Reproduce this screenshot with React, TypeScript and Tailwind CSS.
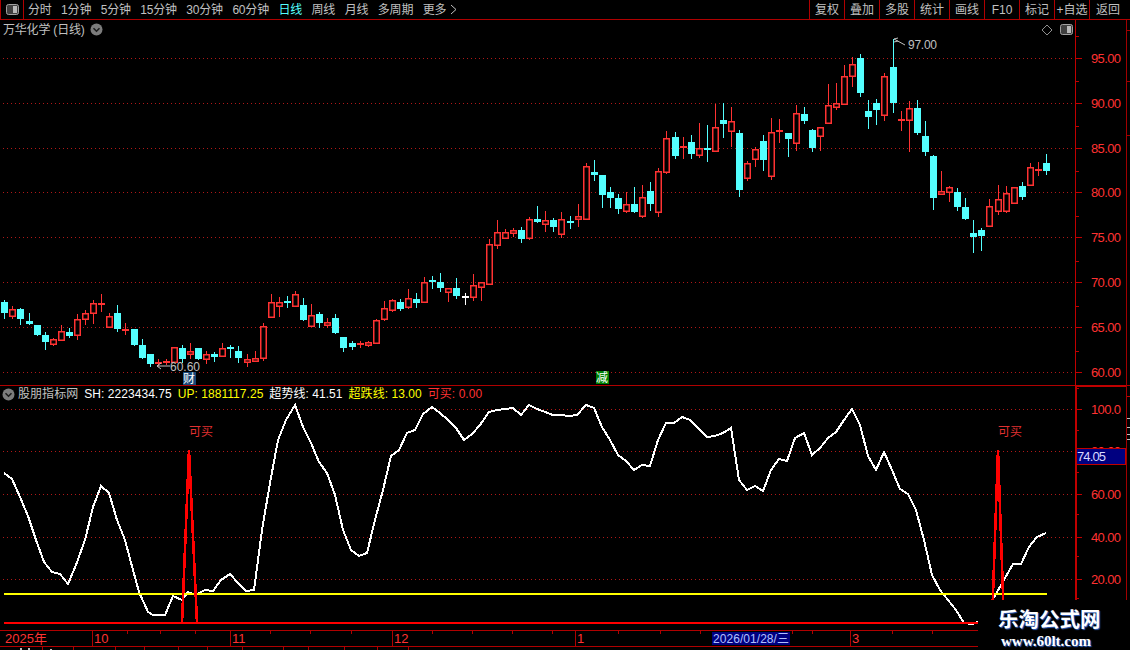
type Candle = [string, number, number, number, number];

// type, high, body top, body bottom, low (all in page pixels)
const candles: Candle[] = [
  ["c", 300, 302, 313, 318], ["r", 306, 309, 316, 318], ["c", 308, 309, 319, 324], ["c", 313, 321, 324, 324],
  ["c", 325, 325, 335, 335], ["c", 332, 335, 342, 349], ["r", 338, 339, 344, 345], ["r", 325, 331, 340, 340],
  ["c", 328, 332, 336, 337], ["r", 314, 319, 335, 339], ["r", 310, 313, 319, 324], ["r", 300, 303, 313, 323],
  ["r", 294, 303, 305, 311], ["r", 313, 316, 327, 327], ["c", 305, 313, 329, 331], ["r", 323, 329, 330, 334],
  ["c", 329, 329, 345, 345], ["c", 339, 345, 358, 358], ["c", 354, 354, 364, 366], ["r", 359, 362, 363, 365],
  ["r", 359, 361, 362, 364], ["r", 347, 347, 362, 362], ["c", 345, 348, 359, 362], ["r", 343, 351, 354, 358],
  ["c", 348, 348, 359, 359], ["r", 351, 354, 359, 363], ["c", 352, 354, 357, 361], ["r", 343, 348, 356, 356],
  ["c", 345, 347, 349, 357], ["c", 346, 351, 358, 362], ["r", 354, 359, 362, 366], ["r", 351, 358, 361, 361],
  ["r", 323, 326, 358, 360], ["r", 294, 302, 317, 317], ["r", 297, 302, 306, 316], ["c", 296, 301, 302, 307],
  ["r", 291, 294, 306, 306], ["c", 298, 305, 320, 320], ["r", 304, 315, 326, 326], ["c", 312, 314, 323, 327],
  ["r", 318, 322, 325, 327], ["c", 314, 318, 333, 333], ["c", 337, 337, 348, 351], ["c", 341, 343, 347, 349],
  ["r", 341, 343, 345, 347], ["r", 341, 342, 345, 346], ["r", 319, 320, 343, 343], ["r", 301, 308, 319, 320],
  ["r", 299, 300, 310, 311], ["c", 299, 302, 309, 310], ["r", 289, 298, 307, 308], ["c", 293, 299, 303, 307],
  ["r", 277, 282, 302, 302], ["c", 276, 280, 282, 288], ["c", 273, 282, 288, 291], ["r", 288, 288, 292, 301],
  ["c", 278, 288, 296, 298], ["w", 293, 296, 296, 304], ["r", 274, 285, 297, 300], ["r", 282, 282, 287, 300],
  ["r", 239, 244, 284, 284], ["r", 220, 232, 245, 248], ["r", 229, 232, 238, 238], ["r", 228, 230, 233, 236],
  ["c", 227, 230, 239, 242], ["r", 217, 219, 238, 239], ["c", 206, 219, 222, 222], ["r", 211, 220, 224, 231],
  ["c", 218, 220, 227, 231], ["r", 212, 219, 234, 237], ["c", 216, 221, 222, 228], ["r", 204, 216, 219, 226],
  ["r", 163, 166, 219, 219], ["c", 160, 172, 175, 180], ["c", 175, 175, 195, 207], ["c", 187, 192, 198, 207],
  ["c", 194, 198, 209, 213], ["r", 192, 204, 211, 212], ["c", 187, 204, 212, 212], ["r", 185, 197, 216, 217],
  ["c", 182, 191, 204, 210], ["r", 168, 171, 212, 216], ["r", 131, 138, 172, 173], ["c", 132, 137, 156, 158],
  ["r", 137, 146, 147, 158], ["c", 135, 142, 154, 158], ["r", 123, 148, 155, 157], ["c", 125, 148, 150, 161],
  ["r", 104, 127, 151, 151], ["c", 103, 120, 124, 137], ["r", 107, 121, 131, 146], ["c", 130, 133, 190, 196],
  ["r", 161, 163, 178, 180], ["r", 147, 149, 159, 166], ["c", 135, 141, 160, 170], ["r", 118, 132, 176, 179],
  ["r", 119, 130, 131, 142], ["c", 133, 133, 139, 156], ["r", 105, 113, 143, 150], ["c", 107, 114, 121, 123],
  ["c", 129, 130, 148, 151], ["r", 127, 127, 136, 150], ["r", 84, 105, 123, 123], ["r", 83, 103, 107, 109],
  ["r", 65, 76, 104, 104], ["r", 57, 64, 76, 86], ["c", 54, 58, 93, 96], ["c", 100, 111, 117, 128],
  ["c", 99, 103, 110, 124], ["r", 73, 76, 115, 120], ["c", 39, 67, 103, 112], ["r", 111, 119, 120, 130],
  ["r", 101, 108, 120, 151], ["c", 100, 108, 133, 134], ["c", 121, 136, 152, 155], ["c", 155, 156, 198, 209],
  ["r", 171, 191, 194, 194], ["r", 186, 187, 192, 201], ["c", 188, 192, 207, 210], ["c", 198, 207, 219, 219],
  ["c", 220, 233, 237, 252], ["c", 228, 230, 236, 250], ["r", 199, 206, 226, 226], ["r", 185, 199, 211, 214],
  ["r", 186, 193, 211, 212], ["r", 187, 187, 203, 203], ["c", 182, 186, 197, 199], ["r", 163, 167, 185, 185],
  ["r", 162, 169, 170, 175], ["c", 154, 163, 171, 174],
];

const whiteLine =
  "4,473 12,479 20,497 28,516 36,540 44,562 52,572 60,574 68,584 76,565 85,540 93,507 101,486 109,493 117,520 125,540 133,570 139,592 148,612 153,615 165,615 173,596 182,600 188,592 195,595 205,590 213,591 221,580 230,574 238,583 246,591 254,590 262,530 270,483 278,440 286,420 295,405 303,427 311,443 319,462 327,473 335,495 343,530 351,550 359,556 367,553 375,520 383,490 391,456 399,450 407,433 415,430 423,414 432,407 440,413 448,420 456,428 464,440 472,434 480,425 489,412 497,410 505,409 513,408 521,415 529,405 537,409 545,412 553,415 561,415 569,416 577,415 586,405 594,408 602,427 610,440 618,455 626,461 634,470 642,465 650,466 658,440 666,423 674,423 682,417 690,420 698,428 707,437 715,436 723,433 731,428 739,480 747,490 755,486 763,491 771,470 779,459 787,461 795,438 804,433 812,455 820,448 828,438 836,432 844,420 852,409 860,425 868,456 876,470 884,452 892,470 900,489 908,494 916,510 924,540 932,575 940,590 948,600 956,610 964,623 972,624 978,622 993,599 1005,578 1013,564 1021,564 1029,547 1037,537 1046,533";

const periods = ["分时", "1分钟", "5分钟", "15分钟", "30分钟", "60分钟", "日线", "周线", "月线", "多周期"];
const actions = ["复权", "叠加", "多股", "统计", "画线", "F10", "标记", "+自选", "返回"];
const priceAxis = [
  { y: 58, label: "95.00" }, { y: 103, label: "90.00" }, { y: 148, label: "85.00" }, { y: 192, label: "80.00" },
  { y: 237, label: "75.00" }, { y: 282, label: "70.00" }, { y: 327, label: "65.00" }, { y: 372, label: "60.00" },
];
const indicatorAxis = [
  { y: 409, label: "100.0" }, { y: 451, label: "80.00" }, { y: 494, label: "60.00" },
  { y: 537, label: "40.00" }, { y: 579, label: "20.00" },
];
const months = [
  { x: 92, label: "10" }, { x: 230, label: "11" }, { x: 392, label: "12" }, { x: 575, label: "1" }, { x: 850, label: "3" },
];
const minorTicks = [127, 160, 195, 270, 310, 351, 432, 472, 512, 552, 618, 660, 700, 792, 812, 892, 932];
const cutTicks = [42, 73, 115, 144, 178, 207, 242, 283, 308, 344, 377, 408];

const Chevron = () => (
  <svg width="13" height="13" viewBox="0 0 13 13">
    <circle cx="6.5" cy="6.5" r="6" fill="#7c7c7c" />
    <path d="M3.5 5.2 L6.5 8.2 L9.5 5.2" fill="none" stroke="#1c1c1c" strokeWidth="1.6" />
  </svg>
);

const SplitIcon = () => (
  <svg width="13" height="11" viewBox="0 0 13 11">
    <rect x="0.5" y="0.5" width="12" height="10" rx="2" fill="#404040" stroke="#a0a0a0" />
    <rect x="7" y="2" width="4" height="7" fill="#b8b8b8" />
  </svg>
);

const CandleMark = ({ c, i }: { c: Candle; i: number }) => {
  const [kind, high, top, bottom, low] = c;
  const x = Math.round(4.3 + 8.075 * i);
  const color = kind === "r" ? "#ff3232" : kind === "c" ? "#54ffff" : "#ffffff";
  const flat = bottom - top <= 2;
  if (kind === "r" && !flat) {
    return (
      <g fill={color}>
        <rect x={x} y={high} width="1" height={top - high} />
        <rect x={x} y={bottom} width="1" height={low - bottom + 1} />
        <rect
          x={x - 2.25}
          y={top + 0.75}
          width="5.5"
          height={bottom - top - 0.5}
          fill="#000"
          stroke={color}
          strokeWidth="1.5"
          shapeRendering="auto"
        />
      </g>
    );
  }
  return (
    <g fill={color}>
      <rect x={x} y={high} width="1" height={low - high + 1} />
      <rect x={x - 3} y={top} width="7" height={flat && kind !== "c" ? 2 : Math.max(bottom - top, 2)} />
    </g>
  );
};

const AxisTicks = ({ from, to, marks }: { from: number; to: number; marks: { y: number; label: string }[] }) => {
  const gap = (marks[1].y - marks[0].y) / 2;
  const minors: number[] = [];
  for (let y = marks[0].y - gap; y < to; y += gap * 2) if (y > from) minors.push(Math.round(y));
  return (
    <g>
      {marks.map((m) => (
        <g key={m.y}>
          <line x1="3" x2="1075" y1={m.y + 0.5} y2={m.y + 0.5} stroke="#b01818" strokeDasharray="1 3" />
          <rect x="1076" y={m.y} width="6" height="1" fill="#c00000" />
          <text x="1091" y={m.y + 5} fontSize="13" fill="#ff3232" textLength="30">
            {m.label}
          </text>
        </g>
      ))}
      {minors.map((y) => (
        <rect key={y} x="1076" y={y} width="3" height="1" fill="#c00000" />
      ))}
    </g>
  );
};

export default function App() {
  return (
    <div className="relative w-[1130px] h-[650px] overflow-hidden bg-black text-[12px] text-[#c0c0c0] font-['Liberation_Sans','Noto_Sans_CJK_SC',sans-serif]">
      <header className="flex h-[20px] border-b border-[#b00000]">
        <div className="flex w-[24px] items-center justify-center border-x border-[#b00000]">
          <SplitIcon />
        </div>
        <nav className="ml-1 flex items-center gap-[9.5px] whitespace-nowrap leading-none tracking-[-0.2px]">
          {periods.map((p) => (
            <span key={p} className={p === "日线" ? "text-[#54ffff]" : ""}>
              {p}
            </span>
          ))}
          <span className="flex items-center gap-[4px]">
            更多
            <svg width="7" height="11" viewBox="0 0 7 11">
              <path d="M1 1 L6 5.5 L1 10" fill="none" stroke="#c0c0c0" />
            </svg>
          </span>
        </nav>
        <div className="ml-auto flex">
          {actions.map((a, i) => (
            <span
              key={a}
              className={`flex items-center justify-center border-l border-[#b00000] ${i === 8 ? "w-[41px] pr-[4px]" : "w-[35px]"}`}
            >
              {a}
            </span>
          ))}
        </div>
      </header>

      <section className="relative h-[365px]">
        <svg className="block" width="1130" height="365" viewBox="0 20 1130 365" shapeRendering="crispEdges">
          <AxisTicks from={20} to={385} marks={priceAxis} />
          {candles.map((c, i) => (
            <CandleMark key={i} c={c} i={i} />
          ))}
          <rect x="1075" y="20" width="1" height="365" fill="#c00000" />
          <rect x="1126" y="20" width="1" height="365" fill="#a00000" />
          <rect x="1127" y="30" width="3" height="1" fill="#a00000" />
          <rect x="1127" y="81" width="3" height="1" fill="#a00000" />
          <rect x="1127" y="135" width="3" height="1" fill="#a00000" />

          <g shapeRendering="auto">
            <path d="M894 39 L905 45 M894 39 L898 38 M894 42 L898 41" fill="none" stroke="#c0c0c0" />
            <text x="908" y="49" fontSize="12" fill="#c0c0c0" textLength="29">
              97.00
            </text>
            <path d="M157 366 L170 366 M157 366 L161 363 M157 366 L161 369" fill="none" stroke="#c0c0c0" />
            <text x="170" y="371" fontSize="12" fill="#c0c0c0" textLength="30">
              60.60
            </text>
            <path d="M1047 25 L1052 30 L1047 35 L1042 30 Z" fill="none" stroke="#909090" />
          </g>
          <rect x="183" y="372" width="13" height="13" fill="#184878" />
          <text x="183" y="383" fontSize="12" fill="#fff" shapeRendering="auto">
            财
          </text>
          <rect x="596" y="371" width="13" height="13" fill="#008000" />
          <text x="596" y="382" fontSize="12" fill="#fff" shapeRendering="auto">
            减
          </text>
        </svg>
        <div className="absolute left-[3px] top-[2px] flex h-[15px] items-center gap-[5px] text-[12px] tracking-[-0.2px]">
          <span>万华化学 (日线)</span>
          <Chevron />
        </div>
        <div className="absolute left-[1060px] top-[4px]">
          <SplitIcon />
        </div>
      </section>

      <section className="relative h-[245px]">
        <svg className="block" width="1130" height="245" viewBox="0 385 1130 245" shapeRendering="crispEdges">
          <rect x="0" y="385" width="1130" height="1" fill="#b00000" />
          <AxisTicks from={386} to={630} marks={indicatorAxis} />
          <rect x="1075" y="385" width="2" height="245" fill="#c00000" />
          <rect x="1077" y="385" width="49" height="2" fill="#c00000" />
          <rect x="1126" y="385" width="1" height="245" fill="#a00000" />
          <rect x="1127" y="396" width="3" height="1" fill="#c00000" />
          <rect x="1127" y="418" width="3" height="1" fill="#c0c0c0" />
          <rect x="1127" y="427" width="3" height="1" fill="#c0c0c0" />
          <rect x="1127" y="434" width="3" height="1" fill="#c0c0c0" />
          <rect x="1127" y="439" width="3" height="1" fill="#c0c0c0" />

          <rect x="1077" y="448" width="49" height="17" fill="#c00000" />
          <rect x="1077" y="449" width="48" height="15" fill="#000080" />
          <text x="1077" y="461" fontSize="13" fill="#d8d8ff" textLength="29" shapeRendering="auto">
            74.05
          </text>

          <polyline points={whiteLine} fill="none" stroke="#ffffff" strokeWidth="2" />
          <rect x="4" y="593" width="1043" height="2" fill="#ffff00" />
          <rect x="4" y="622" width="974" height="2" fill="#ff0000" />
          <polyline points="182,623 189,450 197,623" fill="none" stroke="#ff0000" strokeWidth="2.6" />
          <polyline points="992,623 998,450 1004,623" fill="none" stroke="#ff0000" strokeWidth="2.6" />
          <g shapeRendering="auto" fontSize="12" fill="#e03030">
            <text x="189" y="436">
              可买
            </text>
            <text x="998" y="436">
              可买
            </text>
          </g>
        </svg>
        <div className="absolute left-[2px] top-[1px] flex h-[16px] items-center gap-[6px] whitespace-nowrap text-[12px] tracking-[0.05px]">
          <Chevron />
          <span className="-ml-[3px]">股朋指标网</span>
          <span className="text-white">SH: 2223434.75</span>
          <span className="text-[#ffff00]">UP: 1881117.25</span>
          <span className="text-white">超势线: 41.51</span>
          <span className="text-[#ffff00]">超跌线: 13.00</span>
          <span className="text-[#ff3232]">可买: 0.00</span>
        </div>
      </section>

      <footer className="h-[20px]">
        <svg className="block" width="1130" height="20" viewBox="0 630 1130 20" shapeRendering="crispEdges">
          <rect x="0" y="630" width="1130" height="1" fill="#b00000" />
          <rect x="0" y="646" width="1130" height="1" fill="#b00000" />
          <text x="5" y="643" fontSize="13" fill="#ff3232" shapeRendering="auto">
            2025年
          </text>
          {months.map((m) => (
            <g key={m.x}>
              <rect x={m.x} y="630" width="1" height="16" fill="#b00000" />
              <text x={m.x + 2} y="643" fontSize="13" fill="#ff3232" shapeRendering="auto">
                {m.label}
              </text>
            </g>
          ))}
          {minorTicks.map((x) => (
            <rect key={x} x={x} y="631" width="1" height="3" fill="#b00000" />
          ))}
          {cutTicks.map((x) => (
            <rect key={x} x={x} y="647" width="1" height="3" fill="#b00000" />
          ))}
          <rect x="20" y="648" width="2" height="2" fill="#c0c0c0" />
          <rect x="28" y="648" width="2" height="2" fill="#c0c0c0" />
          <rect x="50" y="649" width="2" height="1" fill="#c0c0c0" />
          <rect x="712" y="632" width="78" height="13" fill="#000080" />
          <text x="713" y="643" fontSize="12" fill="#b0c0ff" textLength="76" shapeRendering="auto">
            2026/01/28/三
          </text>
        </svg>
      </footer>

      <div className="absolute bottom-0 right-0 flex h-[50px] w-[152px] flex-col items-start bg-black pl-[20px] pt-[6px]">
        <span className="text-[20.5px] font-bold leading-[25px] text-white [text-shadow:1px_1px_1px_#3060c0] font-['Noto_Sans_CJK_SC',sans-serif]">
          乐淘公式网
        </span>
        <span className="ml-[3px] mt-[2px] text-[15px] font-bold leading-[16px] text-white [text-shadow:1px_1px_1px_#3060c0] font-['Liberation_Serif',serif]">
          www.60lt.com
        </span>
      </div>
    </div>
  );
}
